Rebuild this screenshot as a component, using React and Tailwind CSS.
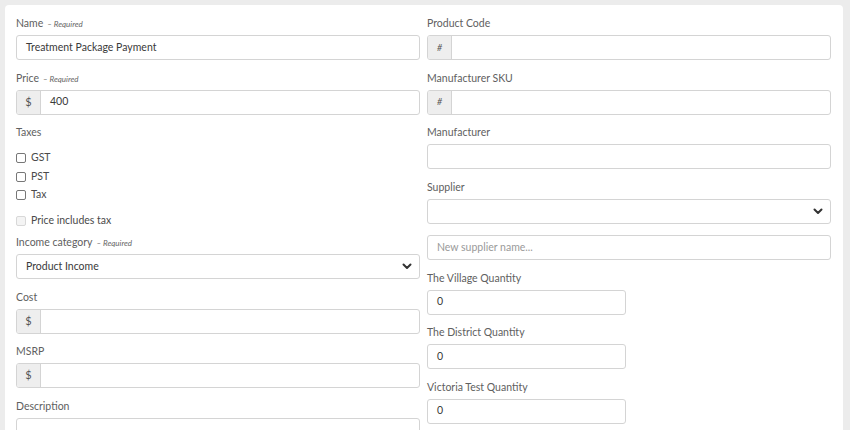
import React from 'react'

const font = { fontFamily: 'Lato, "Open Sans", sans-serif' }

function Chevron() {
  return (
    <svg width="10" height="7" viewBox="0 0 10 7" className="text-[#333]">
      <path d="M1.5 1.5 L5 5 L8.5 1.5" fill="none" stroke="currentColor" strokeWidth="2" strokeLinecap="round" strokeLinejoin="round" />
    </svg>
  )
}

function Label({ text, required }) {
  return (
    <div className="h-[12px] leading-[12px] mb-[6px] text-[10.5px] text-[#606060] whitespace-nowrap">
      {text}
      {required && <span className="ml-[4px] text-[8px] italic text-[#666]">– Required</span>}
    </div>
  )
}

function TextBox({ value, placeholder, addon, addonItalic, className = '' }) {
  return (
    <div className={`flex h-[25px] border border-[#d4d4d4] rounded-[3px] bg-white overflow-hidden ${className}`}>
      {addon && (
        <div className={`w-[24px] shrink-0 flex items-center justify-center bg-[#eeeeee] border-r border-[#d4d4d4] text-[#555] ${addonItalic ? 'italic text-[9px]' : 'text-[11px]'}`}>
          {addon}
        </div>
      )}
      <div className={`flex-1 flex items-center px-[9px] text-[10.5px] ${value ? 'text-[#3a3a3a]' : 'text-[#9a9a9a]'}`}>
        {value || placeholder}
      </div>
    </div>
  )
}

function SelectBox({ value }) {
  return (
    <div className="flex items-center justify-between h-[25px] border border-[#d4d4d4] rounded-[3px] bg-white pl-[9px] pr-[7px] text-[10.5px] text-[#3a3a3a]">
      <span>{value}</span>
      <Chevron />
    </div>
  )
}

function Field({ label, required, children }) {
  return (
    <div>
      <Label text={label} required={required} />
      {children}
    </div>
  )
}

function Check({ label, disabled }) {
  return (
    <div className="flex items-center h-[18.5px] gap-[5px]">
      <span className={`w-[10px] h-[10px] rounded-[2px] border ${disabled ? 'border-[#d8d8d8] bg-[#f4f4f4]' : 'border-[#777] bg-white'}`} />
      <span className="text-[10.5px] text-[#4a4a4a]">{label}</span>
    </div>
  )
}

export default function App() {
  return (
    <div style={font} className="w-[850px] h-[430px] bg-[#ececec] overflow-hidden pt-[5px] pl-[5px]">
      <div className="w-[838px] h-[500px] bg-white rounded-t-[4px] pt-[12px] pl-[11px] pr-[12px] grid grid-cols-2 gap-x-[7px] items-start">
        {/* left column */}
        <div className="flex flex-col">
          <div className="flex flex-col gap-[11.5px]">
            <Field label="Name" required>
              <TextBox value="Treatment Package Payment" />
            </Field>
            <Field label="Price" required>
              <TextBox addon="$" value="400" />
            </Field>
            <div>
              <div className="h-[12px] leading-[12px] mb-[11px] text-[10.5px] text-[#606060]">Taxes</div>
              <Check label="GST" />
              <Check label="PST" />
              <Check label="Tax" />
              <div className="mt-[7px]">
                <Check label="Price includes tax" disabled />
              </div>
            </div>
          </div>
          <div className="flex flex-col gap-[11.5px] mt-[6px]">
            <Field label="Income category" required>
              <SelectBox value="Product Income" />
            </Field>
            <Field label="Cost">
              <TextBox addon="$" />
            </Field>
            <Field label="MSRP">
              <TextBox addon="$" />
            </Field>
            <Field label="Description">
              <TextBox />
            </Field>
          </div>
        </div>

        {/* right column */}
        <div className="flex flex-col gap-[11.5px]">
          <Field label="Product Code">
            <TextBox addon="#" addonItalic />
          </Field>
          <Field label="Manufacturer SKU">
            <TextBox addon="#" addonItalic />
          </Field>
          <Field label="Manufacturer">
            <TextBox />
          </Field>
          <div>
            <Label text="Supplier" />
            <SelectBox value="" />
            <TextBox placeholder="New supplier name..." className="mt-[11.5px]" />
          </div>
          <Field label="The Village Quantity">
            <TextBox value="0" className="w-[199px]" />
          </Field>
          <Field label="The District Quantity">
            <TextBox value="0" className="w-[199px]" />
          </Field>
          <Field label="Victoria Test Quantity">
            <TextBox value="0" className="w-[199px]" />
          </Field>
        </div>
      </div>
    </div>
  )
}
